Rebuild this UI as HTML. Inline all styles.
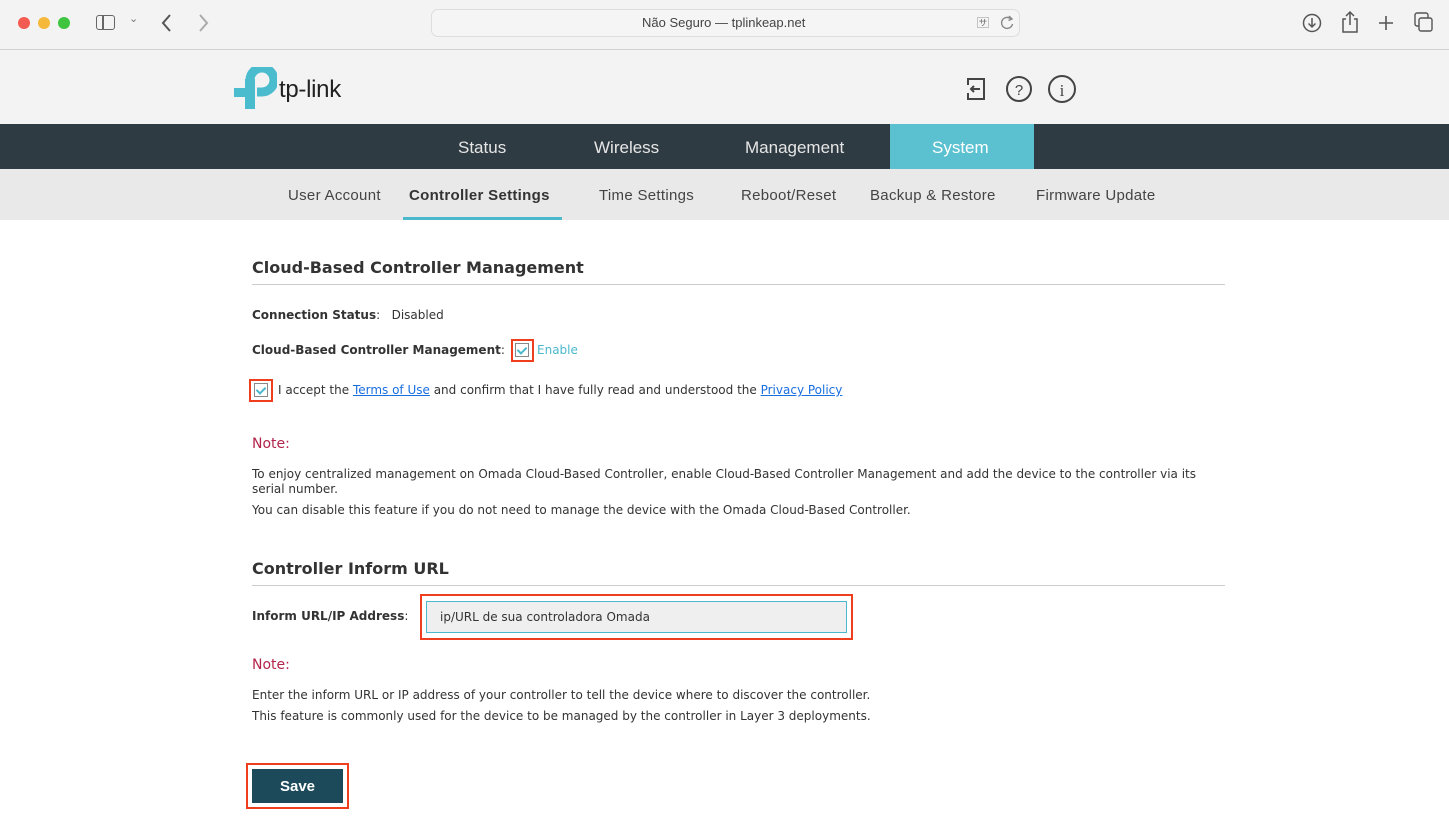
<!DOCTYPE html>
<html><head><meta charset="utf-8"><style>
*{margin:0;padding:0;box-sizing:border-box}
body{width:1449px;height:816px;overflow:hidden;background:#fff;font-family:"DejaVu Sans","Liberation Sans",sans-serif;color:#333;position:relative}
.a{position:absolute;white-space:nowrap}
.chrome{position:absolute;left:0;top:0;width:1449px;height:50px;background:#f3f3f3;border-bottom:1px solid #d0d0d0}
.hdr{position:absolute;top:50px;left:0;width:1449px;height:74px;background:#f3f3f3}
.nav{position:absolute;top:124px;left:0;width:1449px;height:45px;background:#2f3b43}
.nav span{position:absolute;top:14px;color:#e6e6e6;font-size:17px;font-family:"Liberation Sans",sans-serif}
.sub{position:absolute;top:169px;left:0;width:1449px;height:51px;background:#e9e9e9}
.sub span{position:absolute;top:18px;font-size:15px;letter-spacing:0.3px;color:#444;font-family:"Liberation Sans",sans-serif}
h2{position:absolute;font-size:16px;font-weight:bold;color:#333;white-space:nowrap}
.hr{position:absolute;left:252px;width:973px;height:1px;background:#ccc}
.t{position:absolute;font-size:12px;white-space:nowrap}
.b{font-weight:bold}
.cb{position:absolute;width:14px;height:14px;border:1px solid #888;background:#fff}
.cb:after{content:"";position:absolute;left:3px;top:1px;width:4px;height:7px;border:solid #4bb8cc;border-width:0 2px 2px 0;transform:rotate(45deg)}
.red{position:absolute;border:2px solid #ee3e1d}
.note{position:absolute;font-size:14px;color:#b3244a}
a{color:#1a6fe0;text-decoration:underline}
</style></head><body>
<div class="chrome">
 <div class="a" style="left:18px;top:17px;width:12px;height:12px;border-radius:50%;background:#f25a52"></div>
 <div class="a" style="left:38px;top:17px;width:12px;height:12px;border-radius:50%;background:#f6b83a"></div>
 <div class="a" style="left:58px;top:17px;width:12px;height:12px;border-radius:50%;background:#3ec43f"></div>
 <div class="a" style="left:96px;top:15px;width:19px;height:15px;border:1.5px solid #666;border-radius:3px"></div>
 <div class="a" style="left:102px;top:15px;width:1.5px;height:15px;background:#666"></div>
 <div class="a" style="left:129px;top:12px;font-size:11px;color:#777">⌄</div>
 <svg class="a" style="left:160px;top:13px" width="14" height="20"><path d="M10 2 L3 10 L10 18" stroke="#555" stroke-width="2" fill="none"/></svg>
 <svg class="a" style="left:196px;top:13px" width="14" height="20"><path d="M4 2 L11 10 L4 18" stroke="#aaa" stroke-width="2" fill="none"/></svg>
 <div class="a" style="left:431px;top:9px;width:589px;height:28px;border:1px solid #ddd;border-radius:7px;background:#f5f5f5"></div>
 <div class="a" style="left:642px;top:15px;font-size:13px;color:#444;font-family:'Liberation Sans',sans-serif">Não Seguro — tplinkeap.net</div>
 <div class="a" style="left:977px;top:14px;font-size:12px;color:#777">🈂</div>
 <svg class="a" style="left:1000px;top:14px" width="15" height="17"><path d="M11 5 A5.5 5.5 0 1 0 12.5 10" stroke="#888" stroke-width="1.4" fill="none"/><path d="M9 2 L12 5 L8.5 6.5" stroke="#888" stroke-width="1.4" fill="none"/></svg>
 <svg class="a" style="left:1302px;top:13px" width="20" height="20"><circle cx="10" cy="10" r="8.5" stroke="#555" stroke-width="1.5" fill="none"/><path d="M10 5v9M6.5 10.5 10 14l3.5-3.5" stroke="#555" stroke-width="1.5" fill="none"/></svg>
 <svg class="a" style="left:1340px;top:10px" width="20" height="24"><path d="M6 9H3v13h14V9h-3M10 15V2M6 6l4-4 4 4" stroke="#555" stroke-width="1.5" fill="none"/></svg>
 <svg class="a" style="left:1377px;top:14px" width="18" height="18"><path d="M9 2v14M2 9h14" stroke="#555" stroke-width="1.6"/></svg>
 <svg class="a" style="left:1414px;top:12px" width="20" height="21"><rect x="1" y="1" width="13" height="13" rx="2" stroke="#555" stroke-width="1.4" fill="none"/><rect x="5" y="6" width="13" height="13" rx="2" stroke="#555" stroke-width="1.4" fill="#f3f3f3"/></svg>
</div>
<div class="hdr">
 <svg class="a" style="left:233px;top:17px" width="44" height="42"><path d="M17 13 A12 12 0 1 1 29 25 H24" stroke="#4bbccd" stroke-width="9" fill="none"/><rect x="12" y="12" width="10" height="30" fill="#4bbccd"/><rect x="1" y="21" width="21" height="9" fill="#4bbccd"/></svg>
 <div class="a" style="left:279px;top:26px;font-size:24px;color:#222;font-family:'Liberation Sans',sans-serif;letter-spacing:-0.3px">tp-link</div>
 <svg class="a" style="left:964px;top:27px" width="24" height="24"><path d="M4 8V2h16v20H4v-6" stroke="#444" stroke-width="2" fill="none"/><path d="M16 12H7M10 9l-3 3 3 3" stroke="#444" stroke-width="2" fill="none"/></svg>
 <svg class="a" style="left:1005px;top:25px" width="28" height="28"><circle cx="14" cy="14" r="12" stroke="#444" stroke-width="2" fill="none"/><text x="14" y="20" font-size="15" text-anchor="middle" fill="#444" font-family="Liberation Sans">?</text></svg>
 <svg class="a" style="left:1047px;top:24px" width="30" height="30"><circle cx="15" cy="15" r="13" stroke="#444" stroke-width="2" fill="none"/><text x="15" y="22" font-size="17" text-anchor="middle" fill="#444" font-family="Liberation Serif">i</text></svg>
</div>
<div class="nav">
 <span style="left:458px">Status</span><span style="left:594px">Wireless</span><span style="left:745px">Management</span>
 <div class="a" style="left:890px;top:0;width:144px;height:45px;background:#5bc0d0"></div>
 <span style="left:932px;color:#fff">System</span>
</div>
<div class="sub">
 <span style="left:288px">User Account</span>
 <span style="left:409px;font-weight:bold;color:#333">Controller Settings</span>
 <div class="a" style="left:403px;top:48px;width:159px;height:3px;background:#4bb8cc"></div>
 <span style="left:599px">Time Settings</span><span style="left:741px">Reboot/Reset</span><span style="left:870px">Backup &amp; Restore</span><span style="left:1036px">Firmware Update</span>
</div>
<h2 style="left:252px;top:258px">Cloud-Based Controller Management</h2>
<div class="hr" style="top:284px"></div>
<div class="t" style="left:252px;top:308px"><span class="b">Connection Status</span>:&nbsp;&nbsp; Disabled</div>
<div class="t" style="left:252px;top:343px"><span class="b">Cloud-Based Controller Management</span>:</div>
<div class="red" style="left:511px;top:339px;width:23px;height:23px"></div>
<div class="cb" style="left:515px;top:343px"></div>
<div class="t" style="left:537px;top:343px;color:#4bb8cc">Enable</div>
<div class="red" style="left:249px;top:379px;width:24px;height:23px"></div>
<div class="cb" style="left:254px;top:383px"></div>
<div class="t" style="left:278px;top:383px">I accept the <a>Terms of Use</a> and confirm that I have fully read and understood the <a>Privacy Policy</a></div>
<div class="note" style="left:252px;top:436px">Note:</div>
<div class="t" style="left:252px;top:467px">To enjoy centralized management on Omada Cloud-Based Controller, enable Cloud-Based Controller Management and add the device to the controller via its</div>
<div class="t" style="left:252px;top:482px">serial number.</div>
<div class="t" style="left:252px;top:503px">You can disable this feature if you do not need to manage the device with the Omada Cloud-Based Controller.</div>
<h2 style="left:252px;top:559px">Controller Inform URL</h2>
<div class="hr" style="top:585px"></div>
<div class="t" style="left:252px;top:609px"><span class="b">Inform URL/IP Address</span>:</div>
<div class="red" style="left:420px;top:594px;width:433px;height:46px"></div>
<div class="a" style="left:426px;top:601px;width:421px;height:32px;background:#efefef;border:1px solid #4bb8cc"></div>
<div class="t" style="left:440px;top:610px">ip/URL de sua controladora Omada</div>
<div class="note" style="left:252px;top:657px">Note:</div>
<div class="t" style="left:252px;top:688px">Enter the inform URL or IP address of your controller to tell the device where to discover the controller.</div>
<div class="t" style="left:252px;top:709px">This feature is commonly used for the device to be managed by the controller in Layer 3 deployments.</div>
<div class="red" style="left:246px;top:763px;width:103px;height:46px"></div>
<div class="a" style="left:252px;top:769px;width:91px;height:34px;background:#1c4a5a;color:#fff;font-size:15px;font-weight:bold;text-align:center;line-height:36px;font-family:'Liberation Sans',sans-serif">Save</div>
</body></html>
